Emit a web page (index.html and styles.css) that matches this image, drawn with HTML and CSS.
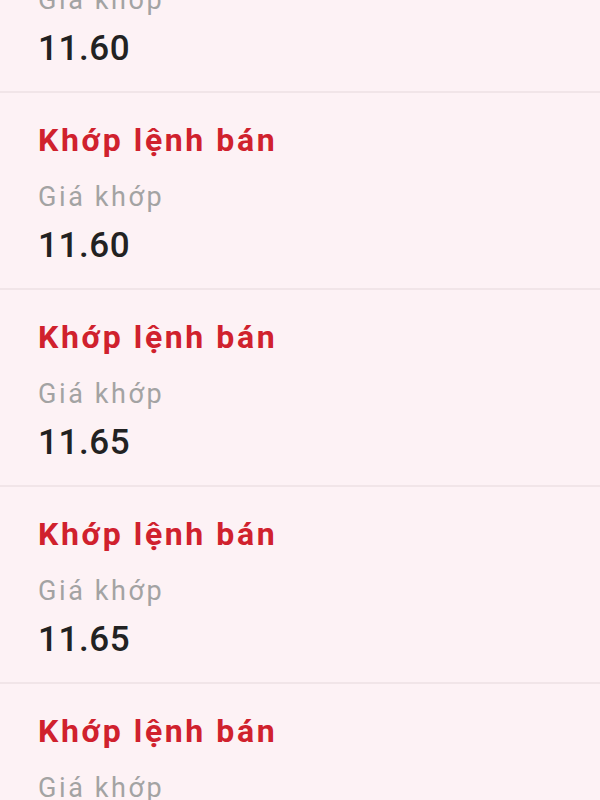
FILE: index.html
```html
<!DOCTYPE html>
<html lang="vi">
<head>
  <meta charset="UTF-8" />
  <meta name="viewport" content="width=device-width, initial-scale=1.0"/>
  <title>Lịch sử khớp lệnh</title>
  <link rel="stylesheet" href="styles.css">
</head>
<body>
  <div class="list">
    <div class="item"><div class="title">Khớp lệnh bán</div><div class="label">Giá khớp</div><div class="value">11.60</div></div>
    <div class="item"><div class="title">Khớp lệnh bán</div><div class="label">Giá khớp</div><div class="value">11.60</div></div>
    <div class="item"><div class="title">Khớp lệnh bán</div><div class="label">Giá khớp</div><div class="value">11.65</div></div>
    <div class="item"><div class="title">Khớp lệnh bán</div><div class="label">Giá khớp</div><div class="value">11.65</div></div>
    <div class="item"><div class="title">Khớp lệnh bán</div><div class="label">Giá khớp</div><div class="value">11.65</div></div>
  </div>
</body>
</html>
```

FILE: styles.css
```css
body {
  margin: 0;
  background: #fdf2f5;
  font-family: Roboto, "Noto Sans", sans-serif;
  overflow: hidden;
}
.list {
  margin-top: -104px;
}
.item {
  padding: 27px 38px 20px;
  border-bottom: 2px solid #f1e5e8;
}
.title {
  font-size: 32px; line-height: 40px;
  font-weight: 700; color: #d0212d;
  letter-spacing: 2.6px;
}
.label {
  margin-top: 21px;
  font-size: 27px; line-height: 32px;
  color: #a3a3a3;
  letter-spacing: 2.6px;
}
.value {
  margin-top: 11px;
  font-size: 35px; line-height: 44px;
  font-weight: 500; color: #222;
  letter-spacing: 0.6px;
}
```
